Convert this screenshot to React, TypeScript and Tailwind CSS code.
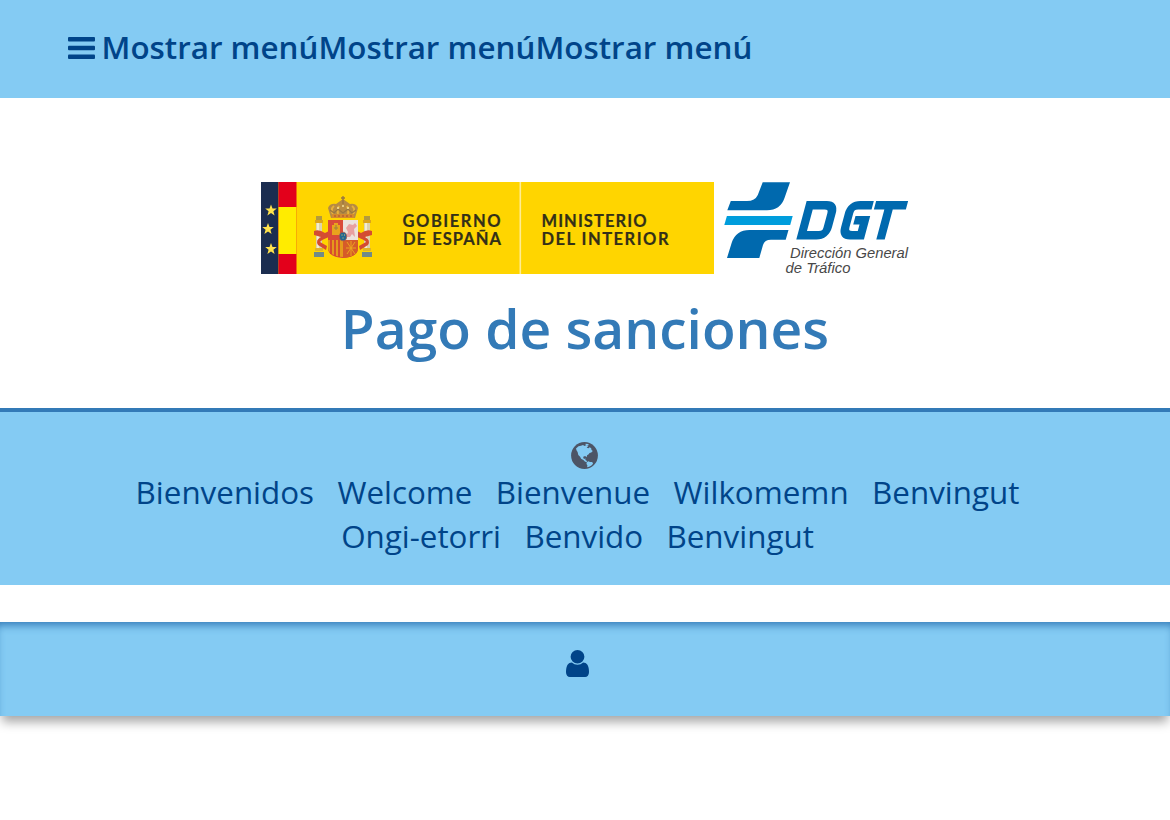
const font = "font-['Open_Sans',sans-serif]";

function BarsIcon() {
  return (
    <svg className="h-[22px] w-[27px] shrink-0" viewBox="0 0 27 22" fill="currentColor" aria-hidden="true">
      <rect x="0" y="0" width="27" height="4.4" rx="1" />
      <rect x="0" y="8.8" width="27" height="4.4" rx="1" />
      <rect x="0" y="17.6" width="27" height="4.4" rx="1" />
    </svg>
  );
}

function GlobeIcon() {
  return (
    <svg className="size-[27px]" viewBox="0 0 27 27" aria-hidden="true">
      <circle cx="13.5" cy="13.5" r="13.4" fill="#4c5566" />
      <path
        fill="#84cbf3"
        d="M5 6.5L7.500 4.300 10 3.800l2-.9 1.500 1 2-.8 1.800 1-1.600 1.600 1.800.6 1.200-1 1.500 1 .3 1.800 1.300 1-1.500 1.400-1.800.5-.8 1.300-1.600 1-.4 2-1-1.100-1.900.1-.7 1.800 1.300.8 1-.6v1.800l1.300.6.4 1.400-2-.4-1.700-1.700-2.300-1.300-1-2-1.800-1.700-.7-3-1-1.500z"
      />
      <path fill="#84cbf3" d="M15.700 20.300l1.700-1 1.600.6 2.200.2.900 1.600-1.700 1.700-2.300 1.300-2 .5.300-2-.9-1.300z" />
      <path fill="#84cbf3" d="M14.500 1.800l2.500.2 1 .9-1.500.7-1.800-.6z" />
    </svg>
  );
}

function UserIcon() {
  return (
    <svg className="h-[27px] w-[23px]" viewBox="256 128 1280 1536" preserveAspectRatio="none" fill="currentColor" aria-hidden="true">
      <path d="M1536 1399q0 109-62.5 187t-150.5 78h-854q-88 0-150.5-78t-62.5-187q0-85 8.5-160.5t31.5-152 58.5-131 94-89 134.5-34.5q131 128 313 128t313-128q76 0 134.5 34.5t94 89 58.5 131 31.5 152 8.5 160.5zm-256-887q0 159-112.5 271.5t-271.5 112.5-271.5-112.5-112.5-271.5 112.5-271.5 271.5-112.5 271.5 112.5 112.5 271.5z" />
    </svg>
  );
}

function Star({ x, y }: { x: number; y: number }) {
  return (
    <path
      transform={`translate(${x} ${y})`}
      fill="#ffe34d"
      d="M0-6L1.5-2 5.8-1.9 2.4.8 3.6 5 0 2.5-3.6 5-2.4.8-5.8-1.9-1.5-2z"
    />
  );
}

function Pillar({ x }: { x: number }) {
  return (
    <g transform={`translate(${x} 0)`}>
      <rect x="-3" y="34" width="6" height="4" fill="#b39a3d" />
      <rect x="-4" y="38" width="8" height="3" fill="#dca51b" />
      <rect x="-3" y="41" width="6" height="28" fill="#dcd2ae" />
      <path d="M-1 41v28" stroke="#f4edcf" strokeWidth="2" />
      <rect x="-4" y="66" width="8" height="3" fill="#e0b52a" />
      <rect x="-5" y="70" width="10" height="5" fill="#718b88" />
    </g>
  );
}

function CoatOfArms() {
  return (
    <g>
      <Pillar x={58} />
      <Pillar x={106} />
      <path d="M53 49q5-2 11 2l4-2v6q-8 3-9 5l7 4-1 4-8-5q-3-5 3-8l-7-2z" fill="#d44c32" />
      <path d="M111 49q-5-2-11 2l-4-2v6q8 3 9 5l-7 4 1 4 8-5q3-5-3-8l7-2z" fill="#d44c32" />
      <path d="M67 38h30v28q0 9-15 10-15-1-15-10z" fill="#d94a38" />
      <path d="M82 38h15v20H82z" fill="#ece2dc" />
      <path d="M67 58h15v17q-15-1-15-10z" fill="#e59a1c" />
      <path d="M70 58v14m4-14v16m4-16v17" stroke="#d5472f" strokeWidth="1.8" />
      <path d="M82 58h15v8q0 9-15 10z" fill="#d65b29" />
      <path d="M86 60l8 12m0-12l-8 12m4-13v15m-5-8h10" stroke="#eaa51e" strokeWidth="1" />
      <path d="M71 53V43h2v-2h4v2h2v10z" fill="#e9a31d" />
      <path d="M73 46h4m-2-3v5" stroke="#9b813d" strokeWidth="1" />
      <path d="M85 55l2-5-2-4 3-4 4 1 2-2 2 3-3 3 1 8-3-3-2 3z" fill="#e8a0a0" />
      <ellipse cx="82" cy="54.5" rx="3.6" ry="4.3" fill="#236791" stroke="#a85a4a" strokeWidth=".8" />
      <path d="M80.5 53h1m1.5 0h1m-2.5 3h1" stroke="#e5c967" />
      <path d="M70 36l-3-10q2-5 8-4l7-5 7 5q6-1 8 4l-3 10z" fill="#b78b43" />
      <path d="M72 32q-3-5 1-8m4 8q-1-5 1-8m14 8q3-5-1-8m-4 8q1-5-1-8" fill="none" stroke="#e8b13a" strokeWidth="2" />
      <path d="M82 14v8m-2-6h4M69 28l4 3 4-4 5 4 5-4 4 4 4-3" fill="none" stroke="#987642" strokeWidth="1.3" />
      <rect x="71" y="32" width="22" height="4" fill="#d58b2c" />
      <path d="M73 34h18" stroke="#ad4b36" strokeDasharray="2 2" />
      <path d="M76 26h2m3-2h2m3 2h2" stroke="#f5df9c" strokeWidth="1.5" />
    </g>
  );
}

function GobiernoLogo() {
  return (
    <svg className="h-[92px] w-[453px] shrink-0" viewBox="0 0 453 92" role="img">
      <rect width="453" height="92" fill="#ffd500" />
      <rect width="17.5" height="92" fill="#1b2d50" />
      <rect x="17.5" width="18" height="92" fill="#e3001b" />
      <rect x="17.5" y="25" width="18" height="47" fill="#ffec00" />
      <Star x={10} y={28.5} />
      <Star x={7} y={47} />
      <Star x={10} y={67} />
      <CoatOfArms />
      <rect x="258.5" width="1.6" height="92" fill="#ffed94" />
      <g className="font-['Lato',sans-serif] text-[16.500px] font-bold" fill="#333018" stroke="#333018" strokeWidth=".2">
        <text x="141.5" y="45.4" textLength="98">GOBIERNO</text>
        <text x="142" y="63" textLength="98">DE ESPAÑA</text>
        <text x="280.5" y="45.4" textLength="105">MINISTERIO</text>
        <text x="280.5" y="63" textLength="127">DEL INTERIOR</text>
      </g>
    </svg>
  );
}

function DgtLogo() {
  return (
    <svg className="h-[96px] w-[190px] shrink-0" viewBox="0 0 190 96" role="img">
      <path d="M38.7.3H66L60.500 16Q56.300 28.300 43 28.300H3.300L6.800 19H23q8 0 10.800-6z" fill="#0069ae" />
      <path d="M2.9 34h65.8l-2.5 9H.3z" fill="#009ddc" />
      <path d="M64.5 48l-2.8 9.7H47q-6.500 0-8 5.300L35.300 76H3L7.700 60.700Q12 48 25.500 48z" fill="#0069ae" />
      <g transform="translate(0 57.5) skewX(-15) translate(0 -57.5)" fill="none" stroke="#0069ae" strokeWidth="8.400">
        <path d="M76.500 23.200V53.300H92.500q8 0 8-8V31.200q0-8-8-8z" />
        <path d="M139.500 23.200H126q-8 0-8 8V45.300q0 8 8 8h9.700V38.200h-10.500" />
        <path d="M141.800 23.200h32M156.500 23.200v34.300" />
      </g>
      <g className="font-['Liberation_Sans',sans-serif] text-[15px] italic" fill="#484848">
        <text x="66" y="76" textLength="118" lengthAdjust="spacingAndGlyphs">Dirección General</text>
        <text x="61.5" y="91" textLength="65" lengthAdjust="spacingAndGlyphs">de Tráfico</text>
      </g>
    </svg>
  );
}

const greetings = [
  ["Bienvenidos", "Welcome", "Bienvenue", "Wilkomemn", "Benvingut"],
  ["Ongi-etorri", "Benvido", "Benvingut"],
];

export default function App() {
  return (
    <div className={`${font} min-h-[820px] overflow-x-hidden bg-white text-[#004489]`}>
      <nav className="flex h-[98px] items-center bg-[#84cbf3] pb-[2px] pl-[67.5px]">
        <BarsIcon />
        <span className="ml-[7px] pb-[2px] text-[31.36px] leading-[44px] font-semibold whitespace-nowrap">
          Mostrar menúMostrar menúMostrar menú
        </span>
      </nav>

      <header className="flex h-[314px] flex-col items-center border-b-4 border-[#337ab7] pt-[84px]">
        <div className="flex h-[92px] gap-[10px] pl-[5px]">
          <GobiernoLogo />
          <DgtLogo />
        </div>
        <h1 className="mt-[15px] text-[55.1px] leading-[77px] font-semibold whitespace-nowrap text-[#337ab7]">
          Pago de sanciones
        </h1>
      </header>

      <section className="flex h-[173px] flex-col items-center bg-[#84cbf3] pt-[30px]">
        <div className="mr-px">
          <GlobeIcon />
        </div>
        <div className="mt-px mr-[15px] flex flex-col items-center text-[31.36px] leading-[44px]">
          {greetings.map((row, i) => (
            <div key={i} className="flex gap-[23.4px]">
              {row.map((word) => (
                <a key={word}>{word}</a>
              ))}
            </div>
          ))}
        </div>
      </section>

      <section className="mt-[37px] flex h-[94px] justify-center bg-[#84cbf3] pt-[27.500px] pr-[16px] shadow-[0_8px_10px_-2px_rgba(0,0,0,0.35),inset_0_7px_8px_-4px_#337ab7]">
        <UserIcon />
      </section>
    </div>
  );
}
